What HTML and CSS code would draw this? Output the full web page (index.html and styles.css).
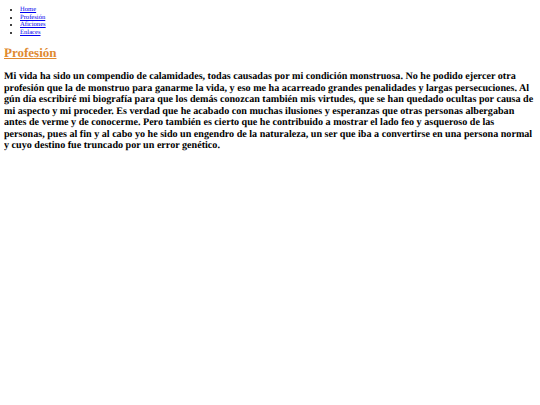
FILE: index.html
```html
<!DOCTYPE html>
<html lang="es">
<head>
<meta charset="utf-8">
<title>Profesión</title>
<link rel="stylesheet" href="styles.css">
</head>
<body class="page">
<ul class="menu">
  <li><a href="#">Home</a></li>
  <li><a href="#">Profesión</a></li>
  <li><a href="#">Aficiones</a></li>
  <li><a href="#">Enlaces</a></li>
</ul>
<h1 class="title"><a href="#">Profesión</a></h1>
<p class="text">Mi vida ha sido un compendio de calamidades, todas causadas por mi condición monstruosa. No he podido ejercer otra profesión que la de monstruo para ganarme la vida, y eso me ha acarreado grandes penalidades y largas persecuciones. Al gún día escribiré mi biografía para que los demás conozcan también mis virtudes, que se han quedado ocultas por causa de mi aspecto y mi proceder. Es verdad que he acabado con muchas ilusiones y esperanzas que otras personas albergaban antes de verme y de conocerme. Pero también es cierto que he contribuido a mostrar el lado feo y asqueroso de las personas, pues al fin y al cabo yo he sido un engendro de la naturaleza, un ser que iba a convertirse en una persona normal y cuyo destino fue truncado por un error genético.</p>
</body>
</html>
```
FILE: styles.css
```css
.page {
  margin: 4px 3px 4px 4px;
  font-family: "Liberation Serif", serif;
  background: #ffffff;
  color: #000000;
  text-rendering: geometricPrecision;
}
.menu {
  margin: 2px 0 0 0;
  padding-left: 16px;
  font-family: "Liberation Serif", serif;
  font-size: 6.6px;
  line-height: 7.6px;
}
.menu a {
  color: #0000ee;
}
.title {
  font-family: "Liberation Serif", serif;
  font-size: 13px;
  line-height: 15px;
  font-weight: bold;
  margin: 9px 0 0 0;
}
.title a {
  color: #e08a2f;
}
.text {
  font-family: "Liberation Serif", serif;
  font-size: 10.12px;
  font-weight: bold;
  line-height: 11.5px;
  margin: 11px 0 0 0;
}
```
